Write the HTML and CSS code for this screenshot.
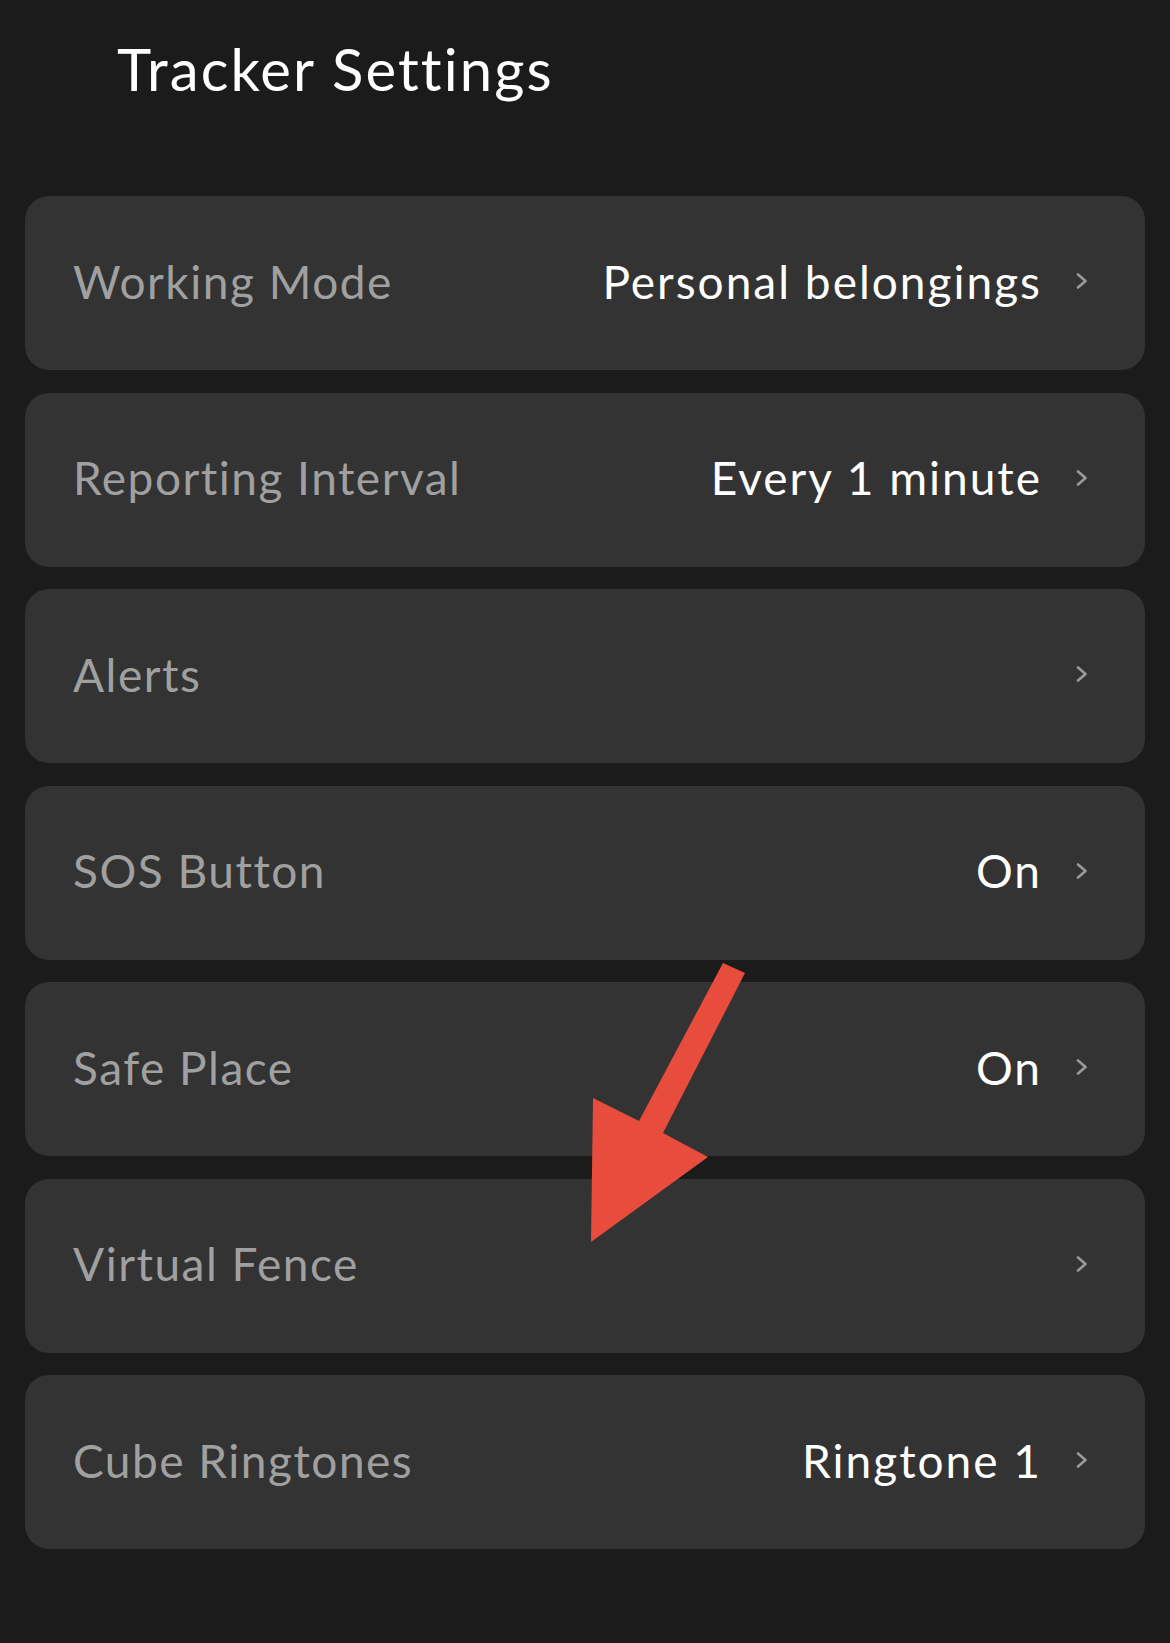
FILE: index.html
```html
<!DOCTYPE html>
<html lang="en">
<head>
    <meta charset="UTF-8">
    <meta name="viewport" content="width=device-width, initial-scale=1.0">
    <title>Tracker Settings</title>
    <link rel="stylesheet" href="styles.css">
</head>
<body>
    <h1 class="page-title">Tracker Settings</h1>

    <div class="settings-list">
        <div class="setting-row">
            <span class="setting-label">Working Mode</span>
            <span class="setting-value">Personal belongings</span>
            <svg class="chevron" viewBox="0 0 12 16"><path d="M2 1.5 L9.5 8 L2 14.5"/></svg>
        </div>
        <div class="setting-row">
            <span class="setting-label">Reporting Interval</span>
            <span class="setting-value">Every 1 minute</span>
            <svg class="chevron" viewBox="0 0 12 16"><path d="M2 1.5 L9.5 8 L2 14.5"/></svg>
        </div>
        <div class="setting-row">
            <span class="setting-label">Alerts</span>
            <span class="setting-value"></span>
            <svg class="chevron" viewBox="0 0 12 16"><path d="M2 1.5 L9.5 8 L2 14.5"/></svg>
        </div>
        <div class="setting-row">
            <span class="setting-label">SOS Button</span>
            <span class="setting-value">On</span>
            <svg class="chevron" viewBox="0 0 12 16"><path d="M2 1.5 L9.5 8 L2 14.5"/></svg>
        </div>
        <div class="setting-row">
            <span class="setting-label">Safe Place</span>
            <span class="setting-value">On</span>
            <svg class="chevron" viewBox="0 0 12 16"><path d="M2 1.5 L9.5 8 L2 14.5"/></svg>
        </div>
        <div class="setting-row">
            <span class="setting-label">Virtual Fence</span>
            <span class="setting-value"></span>
            <svg class="chevron" viewBox="0 0 12 16"><path d="M2 1.5 L9.5 8 L2 14.5"/></svg>
        </div>
        <div class="setting-row">
            <span class="setting-label">Cube Ringtones</span>
            <span class="setting-value">Ringtone 1</span>
            <svg class="chevron" viewBox="0 0 12 16"><path d="M2 1.5 L9.5 8 L2 14.5"/></svg>
        </div>
    </div>

    <!-- annotation arrow drawn over the list -->
    <svg class="arrow-overlay" viewBox="0 0 1170 1643">
        <polygon points="723,963 745,973 663,1133 708,1157 591,1242 593,1098 639,1121"/>
    </svg>
</body>
</html>
```

FILE: styles.css
```css
body {
    margin: 0;
    padding: 0 25px;
    min-height: 1643px;
    box-sizing: border-box;
    position: relative;
    background-color: #1b1b1b;
    font-family: Lato, "Open Sans", sans-serif;
    color: white;
}
.page-title {
    margin: 40px 0 98px 92px;
    font-size: 58px;
    line-height: 1;
    font-weight: 400;
    letter-spacing: 2.1px;
}
.settings-list {
    display: flex;
    flex-direction: column;
    gap: 22.5px;
}
.setting-row {
    display: flex;
    align-items: center;
    height: 174px;
    box-sizing: border-box;
    padding: 0 57px 4px 48px;
    background: #333333;
    border-radius: 24px;
}
.setting-label {
    flex: 1;
    font-size: 46px;
    letter-spacing: 1.5px;
    color: #a0a0a0;
}
.setting-value {
    font-size: 46px;
    letter-spacing: 2px;
    color: white;
    margin-right: 34px;
}
.chevron {
    width: 12px;
    height: 16px;
    fill: none;
    stroke: #9a9a9a;
    stroke-width: 2.6;
    stroke-linecap: round;
    stroke-linejoin: round;
}
.arrow-overlay {
    position: absolute;
    top: 0;
    left: 0;
    width: 1170px;
    height: 1643px;
    pointer-events: none;
    fill: #e84c3d;
}
```
